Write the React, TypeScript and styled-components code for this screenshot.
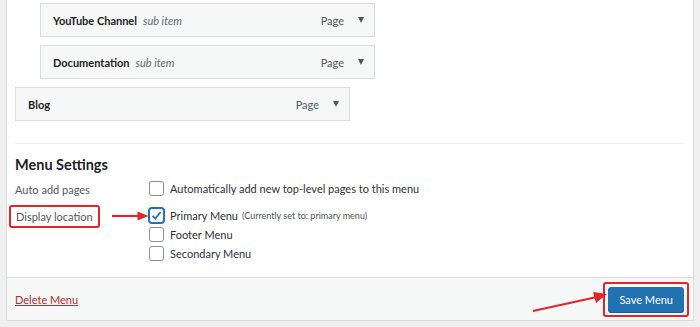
import styled, { createGlobalStyle } from 'styled-components'

const GlobalStyle = createGlobalStyle`
  body {
    margin: 0;
    background: #f0f0f1;
    font-family: Lato, "Liberation Sans", sans-serif;
    color: #1d2327;
  }
`

const Panel = styled.div`
  position: relative;
  margin-left: 6px;
  width: 686px;
  background: #fff;
  border: 1px solid #dcdcde;
  border-top: none;
`

const Body = styled.div`
  padding: 3px 8px 0 8px;
`

const ItemList = styled.div`
  display: flex;
  flex-direction: column;
  gap: 8px;
`

const Item = styled.div<{ $depth: number }>`
  display: flex;
  align-items: center;
  box-sizing: border-box;
  width: 335px;
  height: 34px;
  margin-left: ${p => p.$depth * 25}px;
  padding: 0 10px 0 12px;
  background: #f6f7f7;
  border: 1px solid #dcdcde;
  font-size: 11px;
`

const ItemTitle = styled.span`
  font-weight: 700;
  color: #1d2327;
`

const SubLabel = styled.span`
  margin-left: 6px;
  font-style: italic;
  color: #646970;
`

const ItemType = styled.span`
  margin-left: auto;
  color: #50575e;
  font-size: 11px;
`

const Caret = styled.span`
  margin-left: 14px;
  width: 0;
  height: 0;
  border-left: 3.5px solid transparent;
  border-right: 3.5px solid transparent;
  border-top: 6px solid #50575e;
`

const Divider = styled.hr`
  margin: 22px 0 0 0;
  border: none;
  border-top: 1px solid #f0f0f1;
`

const Heading = styled.h3`
  margin: 12px 0 7px 0;
  font-size: 14.5px;
  font-weight: 700;
  color: #1d2327;
`

const SettingRow = styled.div`
  display: grid;
  grid-template-columns: 134px 1fr;
  align-items: start;
  margin-bottom: 9px;
`

const Label = styled.div<{ $marked?: boolean }>`
  display: flex;
  align-items: center;
  height: 18px;
  margin-left: ${p => (p.$marked ? '-6px' : '0')};
  font-size: 11px;
  color: #50575e;
  white-space: nowrap;
`

const MarkBox = styled.span`
  display: inline-flex;
  align-items: center;
  padding: 3px 5px;
  border: 2px solid #e3242b;
  border-radius: 3px;
`

const Options = styled.div`
  display: flex;
  flex-direction: column;
  gap: 2px;
`

const Option = styled.label`
  display: flex;
  align-items: center;
  height: 17px;
  font-size: 11px;
  color: #2c3338;
  white-space: nowrap;
`

const Box = styled.span<{ $checked?: boolean }>`
  display: inline-flex;
  align-items: center;
  justify-content: center;
  box-sizing: border-box;
  width: 15px;
  height: 15px;
  margin-right: 6px;
  border: 1px solid ${p => (p.$checked ? '#2271b1' : '#8c8f94')};
  border-radius: 3px;
  box-shadow: ${p => (p.$checked ? '0 0 0 1px #2271b1' : 'none')};
  background: #fff;
`

const Note = styled.span`
  margin-left: 4px;
  font-size: 9px;
  color: #50575e;
`

const Footer = styled.div`
  display: flex;
  align-items: center;
  justify-content: space-between;
  margin-top: 15px;
  height: 42px;
  padding: 0 4px 0 8px;
  background: #f6f7f7;
  border-top: 1px solid #dcdcde;
`

const DeleteLink = styled.a`
  font-size: 11px;
  color: #b32d2e;
  text-decoration: underline;
`

const ButtonMark = styled.span`
  display: inline-flex;
  padding: 3px;
  border: 2px solid #e3242b;
  border-radius: 3px;
`

const SaveButton = styled.button`
  height: 25px;
  padding: 0 10px;
  font-family: inherit;
  font-size: 11px;
  color: #fff;
  background: #2271b1;
  border: 1px solid #2271b1;
  border-radius: 3px;
  box-shadow: 0 1px 0 #135e96;
  cursor: pointer;
`

const DiagonalArrow = styled.svg`
  position: absolute;
  left: 520px;
  top: 288px;
`

function RightArrow() {
  return (
    <svg width="38" height="10" viewBox="0 0 38 10" style={{ marginLeft: 12 }}>
      <line x1="0" y1="5" x2="28" y2="5" stroke="#e3242b" strokeWidth="2.2" />
      <polygon points="26,0.5 37,5 26,9.5" fill="#e3242b" />
    </svg>
  )
}

function Check() {
  return (
    <svg width="11" height="11" viewBox="0 0 11 11">
      <path d="M1.5 5.8 L4.3 8.6 L9.6 2" fill="none" stroke="#2271b1" strokeWidth="1.8" />
    </svg>
  )
}

const items = [
  { title: 'YouTube Channel', depth: 1, sub: true },
  { title: 'Documentation', depth: 1, sub: true },
  { title: 'Blog', depth: 0, sub: false },
]

const locations = [
  { name: 'Footer Menu' },
  { name: 'Secondary Menu' },
]

export default function App() {
  return (
    <>
      <GlobalStyle />
      <Panel>
        <Body>
          <ItemList>
            {items.map(it => (
              <Item key={it.title} $depth={it.depth}>
                <ItemTitle>{it.title}</ItemTitle>
                {it.sub && <SubLabel>sub item</SubLabel>}
                <ItemType>Page</ItemType>
                <Caret />
              </Item>
            ))}
          </ItemList>
          <Divider />
          <Heading>Menu Settings</Heading>
          <SettingRow>
            <Label>Auto add pages</Label>
            <Options>
              <Option>
                <Box />
                Automatically add new top-level pages to this menu
              </Option>
            </Options>
          </SettingRow>
          <SettingRow>
            <Label $marked>
              <MarkBox>Display location</MarkBox>
              <RightArrow />
            </Label>
            <Options>
              <Option>
                <Box $checked><Check /></Box>
                Primary Menu
                <Note>(Currently set to: primary menu)</Note>
              </Option>
              {locations.map(l => (
                <Option key={l.name}>
                  <Box />
                  {l.name}
                </Option>
              ))}
            </Options>
          </SettingRow>
        </Body>
        <Footer>
          <DeleteLink href="#">Delete Menu</DeleteLink>
          <ButtonMark>
            <SaveButton>Save Menu</SaveButton>
          </ButtonMark>
        </Footer>
        <DiagonalArrow width="82" height="26" viewBox="0 0 82 26">
          <line x1="6" y1="23" x2="70" y2="9" stroke="#e3242b" strokeWidth="2.2" />
          <polygon points="66,4 80,6 69,15" fill="#e3242b" />
        </DiagonalArrow>
      </Panel>
    </>
  )
}
